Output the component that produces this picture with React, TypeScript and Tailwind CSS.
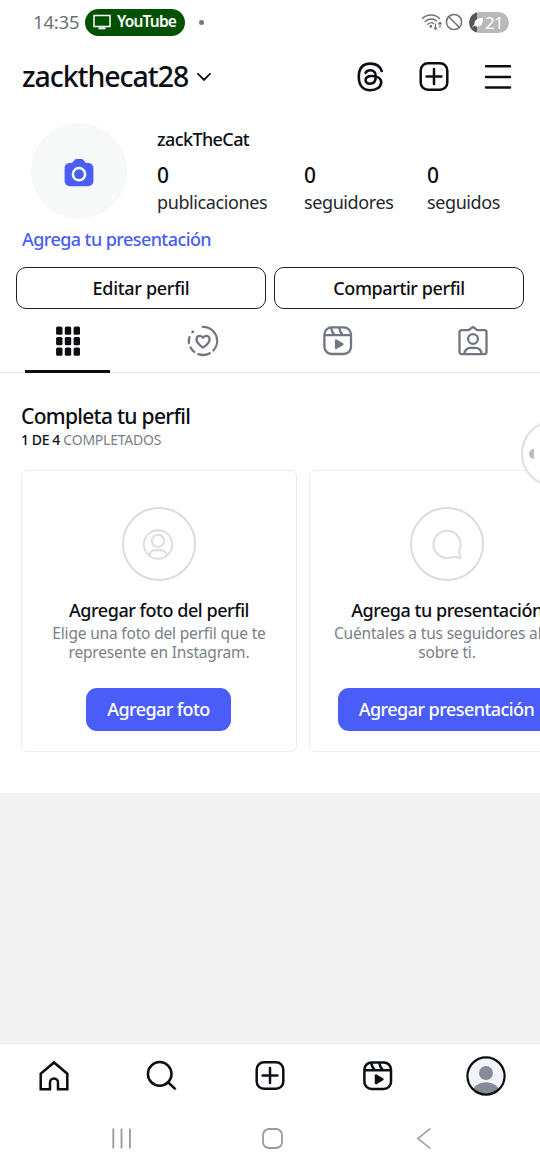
import type { ReactNode, SVGProps } from "react";

function Icon({ size = 32, children, ...rest }: { size?: number; children: ReactNode } & SVGProps<SVGSVGElement>) {
  return (
    <svg
      width={size}
      height={size}
      viewBox="0 0 32 32"
      fill="none"
      stroke="currentColor"
      strokeWidth="2.5"
      strokeLinecap="round"
      strokeLinejoin="round"
      className="shrink-0"
      {...rest}
    >
      {children}
    </svg>
  );
}

const ThreadsIcon = () => (
  <Icon strokeWidth="2.6">
    <path d="M27.7 10C26 5 21.8 2.6 16.4 2.6C8.8 2.6 4.8 7.6 4.8 16C4.8 24.4 9 29.2 16.4 29.2C22.5 29.2 27.2 26 27.2 21.2C27.2 17.4 23 15 17.3 15C13.8 15 11.6 16.5 11.6 19C11.6 21.3 13.5 22.7 16 22.7C19.8 22.7 21.8 20.2 21.8 15.5C21.8 11.4 19.8 9.3 16.4 9.3C14 9.3 12.5 10.2 11.6 11.8" />
  </Icon>
);

const CreateIcon = () => (
  <Icon>
    <rect x="2.7" y="2.2" width="26.6" height="26.6" rx="7.2" />
    <path d="M16 8.1v14.8M8.6 15.500h14.8" />
  </Icon>
);

const MenuIcon = () => (
  <Icon strokeWidth="2.5">
    <path d="M4 5.3h24M4 16h24M4 26.6h24" />
  </Icon>
);

const ReelsIcon = ({ strokeWidth = 2.5 }: { strokeWidth?: number }) => (
  <Icon strokeWidth={strokeWidth}>
    <rect x="2.4" y="2.4" width="26.6" height="26.6" rx="7.2" />
    <path d="M3 10.200h26M9.200 3.200c.6 3 1.600 5 3.400 6.800M17.200 2.800c.6 3.200 1.600 5.400 3.500 7.200" strokeLinecap="butt" />
    <path d="M14 15.500v7.600l6.400-3.800z" fill="currentColor" />
  </Icon>
);

const GridIcon = () => (
  <Icon fill="currentColor" stroke="none">
    {[1.5, 12, 22.6].map((y) =>
      [4.1, 12.8, 21.6].map((x) => <rect key={`${x}-${y}`} x={x} y={y} width="6.400" height="8.200" rx="1.500" />),
    )}
  </Icon>
);

const StoriesHeartIcon = () => (
  <Icon strokeWidth="2.3">
    <path d="M15.800 1.900A14 14 0 0 1 26.400 25.400M22.800 28.200A14 14 0 0 1 11.400 29.200M7.300 26.900A14 14 0 0 1 3.600 22.500M1.900 18A14 14 0 0 1 2.500 12.200M5.400 7.300L6.100 6.600" />
    <path d="M16 22.6C12 19.7 9.5 17.4 9.5 14.4C9.5 12.2 11 10.8 12.8 10.8C14.2 10.8 15.3 11.5 16 12.8C16.7 11.5 17.8 10.8 19.2 10.8C21 10.8 22.6 12.2 22.6 14.4C22.6 17.4 20 19.7 16 22.6z" />
  </Icon>
);

const TaggedIcon = () => (
  <Icon strokeWidth="2.3">
    <path d="M4.5 5.2h7.2L16 1.9l4.3 3.3h7.2a2 2 0 0 1 2 2v19.9a2 2 0 0 1-2 2h-23a2 2 0 0 1-2-2V7.2a2 2 0 0 1 2-2z" />
    <circle cx="16" cy="14" r="4.9" />
    <path d="M7.4 28.6C8 24.8 10.3 22.9 13.6 22.9h4.8C21.7 22.9 24 24.8 24.6 28.6" />
  </Icon>
);

const CameraIcon = () => (
  <svg width="30" height="28" viewBox="0 0 30 28" className="mt-[3px] shrink-0">
    <path
      fill="#4a5df9"
      d="M10.2 1.4C11 .5 11.9 0 13 0h4c1.1 0 2 .5 2.8 1.4l1.3 1.6c.5.6 1.1.9 1.9.9h1.2c3 0 5.2 2.2 5.2 5.2v12.9c0 3-2.2 5.2-5.2 5.2H5.8c-3 0-5.2-2.2-5.2-5.2V9.100c0-3 2.2-5.2 5.2-5.2H7c.8 0 1.4-.3 1.9-.9z"
    />
    <circle cx="15" cy="15.200" r="6.100" fill="none" stroke="#fff" strokeWidth="2.5" />
  </svg>
);

const HomeIcon = () => (
  <Icon>
    <path strokeLinejoin="miter" strokeLinecap="butt" d="M2.7 13.7L16 2.5L29.3 13.7V29.2H20V22.4a4 4 0 0 0-8 0V29.2H2.7z" />
  </Icon>
);

const SearchIcon = () => (
  <Icon>
    <circle cx="13.700" cy="13.900" r="11.800" />
    <path d="M22.3 22.500L29.6 29.300" strokeLinecap="butt" />
  </Icon>
);

const ProfileCircleIcon = () => (
  <Icon size={31} strokeWidth="1.9">
    <circle cx="15.500" cy="16" r="14.7" />
    <circle cx="15.500" cy="12.2" r="6.3" />
    <path d="M6.3 27C7.500 23.5 9.500 21.9 12.500 21.9h6C21.500 21.9 23.500 23.5 24.700 27" />
  </Icon>
);

const BubbleIcon = () => (
  <Icon strokeWidth="1.9">
    <path d="M29.600 30L23.400 28.700C21.200 29.600 19 30 16 30A13.600 13.600 0 1 1 29.600 16.400C29.600 19 29 21 28 23.200z" />
  </Icon>
);

function StatusBar() {
  return (
    <div className="flex h-11 shrink-0 items-center pl-[33px] text-[#707070]">
      <span className="w-[52px] text-[18.5px] tracking-[-0.2px] whitespace-nowrap">14:35</span>
      <div className="flex h-[27px] w-[100px] items-center gap-[6px] rounded-full bg-[#025002] pl-2 text-white">
        <svg width="18" height="16" viewBox="0 0 18 16" fill="none" stroke="currentColor" strokeWidth="1.5">
          <rect x="1" y="1.5" width="16" height="11" />
          <path d="M5.5 14.3h7" strokeWidth="2" />
        </svg>
        <span className="text-[15.5px] leading-none font-semibold tracking-[-0.8px]">YouTube</span>
      </div>
      <div className="ml-[14px] size-[5px] rounded-full bg-[#777777]" />
      <div className="ml-auto flex items-center gap-[2px] pr-[31px]">
        <svg width="22" height="18" viewBox="0 0 22 18" fill="none" stroke="currentColor" strokeWidth="1.4" strokeLinecap="round">
          <path d="M1.5 5.5C6 .8 14 .8 18.5 5.5M4 8.5C7.4 5.2 12.6 5.2 15.500 8M6.800 11.200C8.600 9.500 11.200 9.500 12.500 10.500" />
          <circle cx="9.8" cy="13.4" r=".7" fill="currentColor" />
          <path d="M14.5 11v5M13.100 14.800l1.4 1.400 1.4-1.400M19 14.500v-5M17.600 10.800L19 9.400l1.4 1.400" strokeWidth="1.1" />
        </svg>
        <svg width="18" height="18" viewBox="0 0 18 18" fill="none" stroke="currentColor" strokeWidth="1.5">
          <circle cx="9" cy="9" r="7.6" />
          <path d="M3.7 3.7l10.6 10.6" />
        </svg>
        <div className="ml-1 flex h-[21px] w-10 items-center gap-px overflow-hidden rounded-full bg-[linear-gradient(90deg,#575757_8px,#b9b9b9_8px)] pl-[2px] text-white">
          <svg width="13" height="13" viewBox="0 0 13 13" fill="currentColor">
            <path d="M12 1.5C12 8 10 10.5 6.5 10.5C5 10.5 4 10 3.5 9.5C2.6 10.5 1.8 11 .8 11.4C1.7 10.3 2.8 9 3.5 8C3 4.5 6 2.5 12 1.5z" />
          </svg>
          <span className="text-[17px] leading-none tracking-[-0.8px]">21</span>
        </div>
      </div>
    </div>
  );
}

function Header() {
  return (
    <header className="flex h-[66px] shrink-0 items-center pl-[22px]">
      <h1 className="-mt-[2px] text-[28.5px] leading-none font-medium tracking-[-1.05px]">zackthecat28</h1>
      <svg width="16" height="10" viewBox="0 0 16 10" fill="none" stroke="currentColor" strokeWidth="1.9" strokeLinecap="round" className="ml-2">
        <path d="M2 1.8l6 6 6-6" />
      </svg>
      <div className="ml-auto flex gap-8 pr-[26px]">
        <ThreadsIcon />
        <CreateIcon />
        <MenuIcon />
      </div>
    </header>
  );
}

function Stat({ label, className }: { label: string; className: string }) {
  return (
    <div className={className}>
      <div className="text-[21px] leading-[26px] font-medium">0</div>
      <div className="text-[18px] leading-[28px] tracking-[-0.4px] text-[#24272b]">{label}</div>
    </div>
  );
}

function ProfileSummary() {
  return (
    <section className="flex h-[114px] shrink-0 pt-[13px] pl-[31px]">
      <div className="flex size-24 shrink-0 items-center justify-center rounded-full bg-[#f7f9f9]">
        <CameraIcon />
      </div>
      <div className="ml-[30px] whitespace-nowrap">
        <div className="mt-[3px] text-[18px] leading-[26px] font-medium tracking-[-0.6px]">zackTheCat</div>
        <div className="mt-[10px] flex">
          <Stat label="publicaciones" className="w-[147px]" />
          <Stat label="seguidores" className="w-[123px]" />
          <Stat label="seguidos" className="w-[80px]" />
        </div>
      </div>
    </section>
  );
}

function Tabs() {
  return (
    <nav className="flex h-16 shrink-0 border-b border-[#e6e7e8] text-[#70757f]">
      <div className="relative flex flex-1 justify-center pt-4 text-[#0b0f14]">
        <GridIcon />
        <div className="absolute -bottom-px left-[25px] h-[3px] w-[85px] bg-[#0b0f14]" />
      </div>
      <div className="flex flex-1 justify-center pt-4">
        <StoriesHeartIcon />
      </div>
      <div className="flex flex-1 justify-center pt-4">
        <ReelsIcon strokeWidth={2.3} />
      </div>
      <div className="flex flex-1 justify-center pt-4">
        <TaggedIcon />
      </div>
    </nav>
  );
}

interface TaskCardProps {
  icon: ReactNode;
  title: string;
  lines: string[];
  action: string;
  actionClass: string;
}

function TaskCard({ icon, title, lines, action, actionClass }: TaskCardProps) {
  return (
    <article className="flex h-[282px] w-[276px] shrink-0 flex-col items-center rounded-md border border-[#ededee] pt-[36px] whitespace-nowrap">
      <div className="-ml-px flex size-[74px] items-center justify-center rounded-full border-2 border-[#dcdcdc] text-[#dcdcdc]">{icon}</div>
      <h3 className="mt-[16px] text-[18px] leading-[26px] font-medium tracking-[-0.46px]">{title}</h3>
      <div className="mt-px text-center text-[15.5px] leading-[19px] tracking-[-0.18px] text-[#7b8088]">
        {lines.map((line) => (
          <p key={line}>{line}</p>
        ))}
      </div>
      <button className={`mt-[26px] -ml-px h-[43px] rounded-[11px] bg-[#4a5df9] text-[18px] font-medium text-white ${actionClass}`}>
        {action}
      </button>
    </article>
  );
}

function CompleteProfile() {
  return (
    <section className="h-[420px] shrink-0 overflow-hidden pt-[29px] pl-[21px]">
      <h2 className="text-[21px] leading-[28px] font-medium tracking-[-0.7px]">Completa tu perfil</h2>
      <p className="text-[14px] leading-[20px] tracking-[-0.23px] text-[#7b8088]">
        <span className="font-medium tracking-[-0.4px] text-[#0b0f14]">1 DE 4</span> COMPLETADOS
      </p>
      <div className="mt-[20px] flex gap-3">
        <TaskCard
          icon={<ProfileCircleIcon />}
          title="Agregar foto del perfil"
          lines={["Elige una foto del perfil que te", "represente en Instagram."]}
          action="Agregar foto"
          actionClass="w-[145px] tracking-[-0.6px]"
        />
        <TaskCard
          icon={<BubbleIcon />}
          title="Agrega tu presentación"
          lines={["Cuéntales a tus seguidores algo", "sobre ti."]}
          action="Agregar presentación"
          actionClass="w-[218px] tracking-[-0.55px]"
        />
      </div>
    </section>
  );
}

function BottomNav() {
  return (
    <nav className="grid h-16 shrink-0 grid-cols-5 place-items-center">
      <HomeIcon />
      <SearchIcon />
      <CreateIcon />
      <ReelsIcon />
      <svg width="40" height="40" viewBox="0 0 40 40">
        <clipPath id="avatar">
          <circle cx="20" cy="20" r="18" />
        </clipPath>
        <circle cx="20" cy="20" r="18.5" fill="#f1f3f8" />
        <g clipPath="url(#avatar)" fill="#858b98">
          <circle cx="20" cy="17" r="7" />
          <ellipse cx="20" cy="36" rx="13.5" ry="9.7" />
        </g>
        <circle cx="20" cy="20" r="18.6" fill="none" stroke="#0b0f14" strokeWidth="2.2" />
      </svg>
    </nav>
  );
}

function SystemNav() {
  return (
    <div className="flex h-[62px] shrink-0 items-center pl-[109px] text-[#999999]">
      <svg width="24" height="24" viewBox="0 0 24 24" stroke="currentColor" strokeWidth="1.8">
        <path d="M4.3 1.500v20M12.5 1.500v20M20.9 1.500v20" />
      </svg>
      <svg width="24" height="24" viewBox="0 0 24 24" fill="none" stroke="currentColor" strokeWidth="1.8" className="ml-[127px]">
        <rect x="3" y="2" width="19" height="19" rx="6" />
      </svg>
      <svg width="24" height="24" viewBox="0 0 24 24" fill="none" stroke="currentColor" strokeWidth="1.6" className="ml-[128px]">
        <path d="M18.300 1.500L6 11.500l12.300 10" />
      </svg>
    </div>
  );
}

export default function App() {
  return (
    <div className="relative flex h-[1170px] w-[540px] flex-col overflow-hidden bg-white font-['Noto_Sans',sans-serif] text-[#0b0f14] [font-stretch:semi-condensed]">
      <StatusBar />
      <Header />
      <ProfileSummary />
      <p className="mt-[2px] h-[41px] shrink-0 pl-[22px] text-[18px] leading-[27px] font-medium tracking-[-0.58px] text-[#4a5df9]">
        Agrega tu presentación
      </p>
      <div className="flex h-[42px] shrink-0 gap-2 px-4">
        <button className="flex-1 rounded-[10px] border-[1.5px] border-[#1f2226] text-[18px] font-medium tracking-[-0.3px]">Editar perfil</button>
        <button className="flex-1 rounded-[10px] border-[1.5px] border-[#1f2226] text-[18px] font-medium tracking-[-0.4px]">Compartir perfil</button>
      </div>
      <Tabs />
      <CompleteProfile />
      <div className="h-[251px] shrink-0 border-b border-[#ececec] bg-[#f3f3f3]" />
      <BottomNav />
      <SystemNav />
      <div className="absolute top-[420px] left-[521px] flex size-[67px] items-center rounded-full border-2 border-[#dedede] bg-white pl-[6px]">
        <div className="h-[10px] w-[5px] rounded-l-full bg-[#bcbcbc]" />
      </div>
    </div>
  );
}
